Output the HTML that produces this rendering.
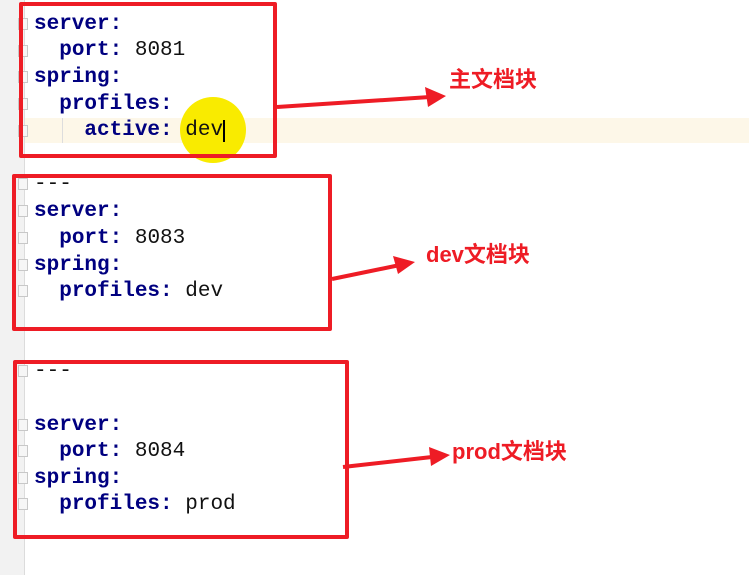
<!DOCTYPE html>
<html><head><meta charset="utf-8"><style>
html,body{margin:0;padding:0}
body{width:749px;height:575px;position:relative;overflow:hidden;background:#fff;font-family:"Liberation Mono",monospace}
.gut{position:absolute;left:0;top:0;width:24px;height:575px;background:#f2f2f2;border-right:1px solid #dcdcdc}
.hl{position:absolute;left:25px;top:118px;width:724px;height:25px;background:#fdf7e8}
.l{position:absolute;left:34px;font-size:21px;line-height:22px;white-space:pre;color:#111}
.k{color:#000080;font-weight:bold}
.box{position:absolute;border:4px solid #ee1c25;border-radius:2px;box-sizing:border-box}
.lab{position:absolute;color:#ee1c25;font-weight:bold;font-size:22px;font-family:"Liberation Sans","Noto Sans CJK SC",sans-serif;line-height:24px}
.f{position:absolute;left:18px;width:10px;height:12px;border:1px solid #c8c8c8;background:#f6f6f6;box-sizing:border-box}
</style></head><body>
<div class="gut"></div>
<div class="hl"></div>
<div style="position:absolute;left:62px;top:118px;width:1px;height:25px;background:#ddd"></div>
<div style="position:absolute;left:180px;top:97px;width:66px;height:66px;border-radius:50%;background:#f9eb00"></div>
<div class="f" style="top:18px"></div><div class="f" style="top:45px"></div><div class="f" style="top:71px"></div><div class="f" style="top:98px"></div><div class="f" style="top:125px"></div>
<div class="f" style="top:178px"></div><div class="f" style="top:205px"></div><div class="f" style="top:232px"></div><div class="f" style="top:259px"></div><div class="f" style="top:285px"></div>
<div class="f" style="top:365px"></div><div class="f" style="top:419px"></div><div class="f" style="top:445px"></div><div class="f" style="top:472px"></div><div class="f" style="top:498px"></div>

<div class="l" style="top:14px"><span class="k">server:</span></div>
<div class="l" style="top:40px">  <span class="k">port:</span> 8081</div>
<div class="l" style="top:67px"><span class="k">spring:</span></div>
<div class="l" style="top:94px">  <span class="k">profiles:</span></div>
<div class="l" style="top:120px">    <span class="k">active:</span> dev</div>
<div style="position:absolute;left:223px;top:120px;width:2px;height:22px;background:#000"></div>

<div class="l" style="top:174px">---</div>
<div class="l" style="top:201px"><span class="k">server:</span></div>
<div class="l" style="top:228px">  <span class="k">port:</span> 8083</div>
<div class="l" style="top:255px"><span class="k">spring:</span></div>
<div class="l" style="top:281px">  <span class="k">profiles:</span> dev</div>

<div class="l" style="top:361px">---</div>
<div class="l" style="top:415px"><span class="k">server:</span></div>
<div class="l" style="top:441px">  <span class="k">port:</span> 8084</div>
<div class="l" style="top:468px"><span class="k">spring:</span></div>
<div class="l" style="top:494px">  <span class="k">profiles:</span> prod</div>

<div class="box" style="left:19px;top:2px;width:258px;height:156px"></div>
<div class="box" style="left:12px;top:174px;width:320px;height:157px"></div>
<div class="box" style="left:13px;top:360px;width:336px;height:179px"></div>

<svg width="749" height="575" style="position:absolute;left:0;top:0">
<g stroke="#ee1c25" stroke-width="4" fill="#ee1c25">
<line x1="277" y1="107" x2="430" y2="97"/>
<polygon points="446,96 425,87 428,107" stroke="none"/>
<line x1="332" y1="279" x2="400" y2="265"/>
<polygon points="415,262 393,256 398,274" stroke="none"/>
<line x1="343" y1="467" x2="432" y2="457"/>
<polygon points="450,455 429,447 431,466" stroke="none"/>
</g></svg>
<div class="lab" style="left:449px;top:68px">主文档块</div>
<div class="lab" style="left:426px;top:243px">dev文档块</div>
<div class="lab" style="left:452px;top:440px">prod文档块</div>
</body></html>
